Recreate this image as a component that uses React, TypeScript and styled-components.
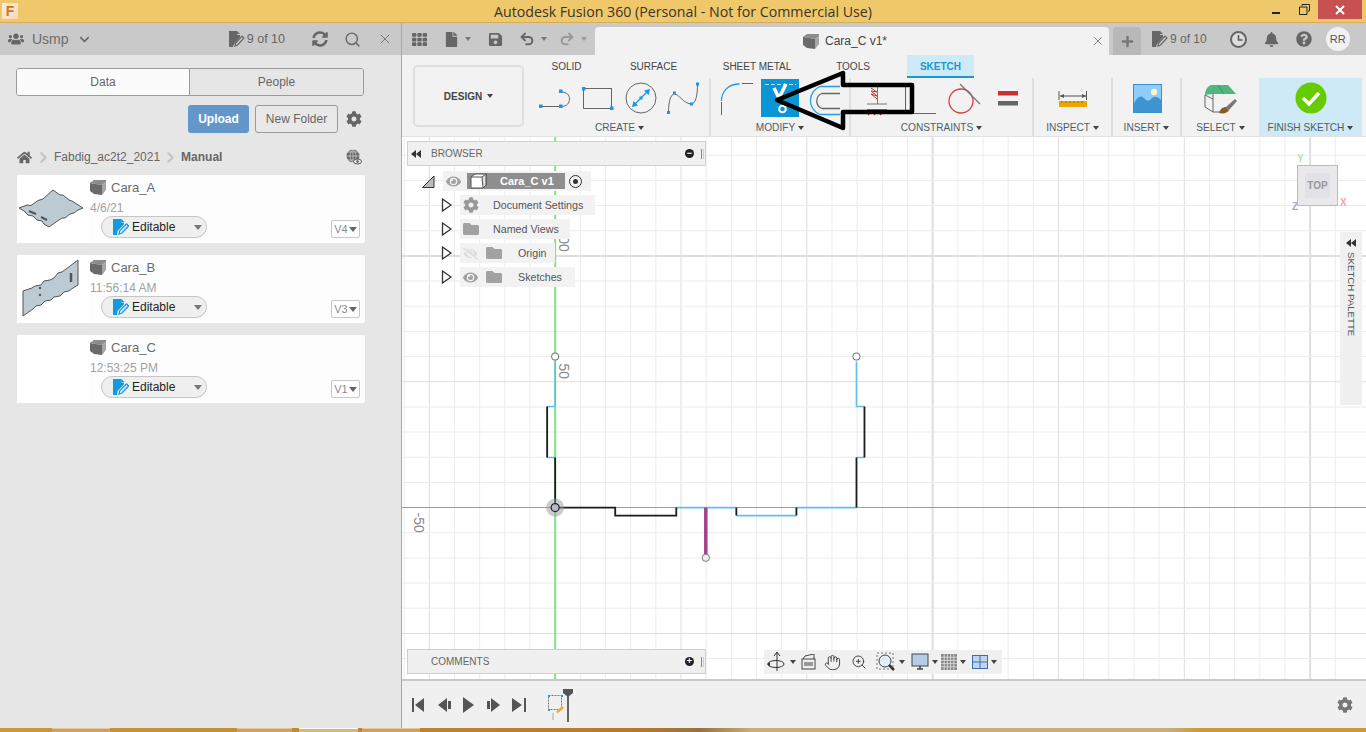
import styled, { createGlobalStyle } from "styled-components";
import {
  FaBell,
  FaCog,
  FaEye,
  FaEyeSlash,
  FaFolder,
  FaHome,
  FaPlus,
  FaQuestionCircle,
  FaSave,
  FaSyncAlt,
  FaTh,
  FaUsers,
  FaFile,
} from "react-icons/fa";
import { ChevronDown, ChevronRight, Hand, Redo2, Search, Undo2, X, ZoomIn } from "lucide-react";

const GlobalStyle = createGlobalStyle`
  html, body {
    margin: 0;
    padding: 0;
    overflow: hidden;
  }
  body {
    font-family: "Liberation Sans", Arial, sans-serif;
    color: #555;
  }
  * {
    box-sizing: border-box;
  }
`;

const Page = styled.div`
  width: 1366px;
  height: 732px;
  display: flex;
  flex-direction: column;
  overflow: hidden;
  background: #f0f0f0;
  position: relative;
`;

/* window chrome */
const TitleBar = styled.div`
  height: 23px;
  flex: none;
  display: flex;
  align-items: flex-start;
  background: #f0c86c;
  border-bottom: 1px solid #d6ac58;
  position: relative;
`;
const AppLogo = styled.div`
  width: 16px;
  height: 16px;
  margin: 3px 0 0 2px;
  background: linear-gradient(135deg, #fbeedd, #f6d9b8);
  color: #d9701e;
  font: 700 14px/16px "Liberation Sans", sans-serif;
  text-align: center;
`;
const WindowTitle = styled.div`
  position: absolute;
  left: 0;
  right: 0;
  top: 2px;
  text-align: center;
  font: 14.2px/19px "Open Sans", sans-serif;
  color: #3c3425;
`;
const WindowButtons = styled.div`
  margin-left: auto;
  display: flex;
  height: 19px;
  align-items: center;
`;
const WindowButton = styled.div<{ $close?: boolean }>`
  width: ${(p) => (p.$close ? "44px" : "28px")};
  height: 19px;
  margin-right: ${(p) => (p.$close ? "4px" : "0")};
  display: flex;
  align-items: center;
  justify-content: center;
  background: ${(p) => (p.$close ? "#c75050" : "transparent")};
`;
const TaskBar = styled.div`
  height: 4px;
  flex: none;
  display: flex;
  background: linear-gradient(
    90deg,
    #c99a3c 0,
    #c28a30 300px,
    #b8782c 640px,
    #94743c 700px,
    #c8ae7c 752px,
    #c8ae7c 1170px,
    #c89a38 1200px,
    #c89a38 100%
  );
`;
const TaskItem = styled.div<{ $at: number; $w: number; $active?: boolean }>`
  position: absolute;
  left: ${(p) => p.$at}px;
  bottom: 0;
  width: ${(p) => p.$w}px;
  height: 4px;
  background: ${(p) => (p.$active ? "#d8b878" : "#cda060")};
  border-top: 1px solid ${(p) => (p.$active ? "#fff" : "#e4c89a")};
`;

const Workspace = styled.div`
  flex: 1;
  display: flex;
  min-height: 0;
`;

/* data panel */
const DataPanel = styled.aside`
  width: 402px;
  flex: none;
  background: #e6e6e6;
  border-right: 1px solid #a8a8a8;
  display: flex;
  flex-direction: column;
`;
const PanelHeader = styled.div`
  height: 32px;
  background: #c9c9c9;
  display: flex;
  align-items: center;
  padding: 0 8px 0 8px;
  color: #666;
`;
const TeamName = styled.span`
  font-size: 14px;
  margin: 0 8px 0 8px;
  color: #6b6b6b;
`;
const JobCount = styled.span<{ $small?: boolean }>`
  display: flex;
  align-items: center;
  gap: 2px;
  font-size: ${(p) => (p.$small ? "12px" : "12.5px")};
  color: #666;
`;
const HeaderTools = styled.div`
  margin-left: auto;
  display: flex;
  align-items: center;
  gap: 16px;
  & > span {
    margin-right: 11px;
  }
`;
const PanelBody = styled.div`
  padding: 13px 37px 0 16px;
  width: 402px;
`;
const SegmentTabs = styled.div`
  display: flex;
  width: 348px;
  height: 28px;
  border: 1px solid #9a9a9a;
  border-radius: 3px;
  overflow: hidden;
`;
const Segment = styled.div<{ $active?: boolean; $w: number }>`
  width: ${(p) => p.$w}px;
  text-align: center;
  font-size: 12px;
  line-height: 26px;
  color: #666;
  background: ${(p) => (p.$active ? "#fbfbfb" : "#e6e6e6")};
  border-right: ${(p) => (p.$active ? "1px solid #9a9a9a" : "none")};
`;
const ActionRow = styled.div`
  display: flex;
  justify-content: flex-end;
  align-items: center;
  margin-top: 9px;
  height: 28px;
  width: 348px;
  gap: 6px;
  padding-right: 2px;
  color: #666;
`;
const UploadButton = styled.button`
  width: 61px;
  height: 28px;
  border: none;
  border-radius: 3px;
  background: #6497c9;
  color: #fff;
  font: 700 12px "Liberation Sans", sans-serif;
  padding: 0;
`;
const FolderButton = styled.button`
  width: 83px;
  height: 28px;
  border: 1px solid #9a9a9a;
  border-radius: 3px;
  background: #e8e8e8;
  color: #666;
  font: 12px "Liberation Sans", sans-serif;
  padding: 0;
  margin-right: 2px;
`;
const Crumbs = styled.div`
  display: flex;
  align-items: center;
  gap: 2px;
  margin-top: 14px;
  height: 20px;
  width: 348px;
  padding-left: 1px;
  font-size: 12px;
  color: #666;
  & > svg:first-child {
    margin-right: 1px;
  }
  & > svg:last-child {
    margin-left: auto;
    margin-right: 2px;
  }
`;
const CrumbStrong = styled.b`
  color: #666;
`;
const CardList = styled.div`
  display: flex;
  flex-direction: column;
  gap: 12px;
  margin: 8px 0 0 1px;
`;
const Card = styled.div`
  width: 348px;
  height: 68px;
  display: flex;
  background: #fdfdfd;
  border-radius: 2px;
`;
const Thumb = styled.div`
  width: 73px;
  height: 68px;
  flex: none;
  background: #fff;
`;
const CardBody = styled.div`
  flex: 1;
  padding-top: 4px;
`;
const CardTitle = styled.div`
  display: flex;
  align-items: center;
  gap: 5px;
  height: 17px;
  font-size: 13px;
  color: #6a6a6a;
`;
const CardTime = styled.div`
  font-size: 12px;
  line-height: 14px;
  margin-top: 5px;
  color: #a2a2a2;
`;
const CardFooter = styled.div`
  display: flex;
  align-items: flex-end;
  justify-content: space-between;
  padding: 0 5px 0 11px;
  margin-top: 1px;
`;
const EditablePill = styled.div`
  width: 106px;
  height: 22px;
  display: flex;
  align-items: center;
  padding: 0 4px 0 11px;
  border: 1px solid #c6c6c6;
  border-radius: 11px;
  background: #efefef;
  font-size: 12px;
  color: #222;
  gap: 3px;
  & > i {
    margin-left: auto;
  }
`;
const VersionBox = styled.div`
  width: 29px;
  height: 18px;
  display: flex;
  align-items: center;
  justify-content: center;
  gap: 1px;
  border: 1px solid #c8c8c8;
  border-radius: 2px;
  font-size: 11px;
  color: #8a8a8a;
  background: #fff;
`;

/* design area */
const DesignArea = styled.main`
  flex: 1;
  display: flex;
  flex-direction: column;
  min-width: 0;
`;
const TabStrip = styled.div`
  height: 32px;
  background: #c9c9c9;
  display: flex;
  align-items: flex-end;
  color: #666;
`;
const QuickTools = styled.div`
  width: 193px;
  height: 32px;
  padding-left: 10px;
  display: flex;
  align-items: center;
`;
const QuickTool = styled.span<{ $w: number; $dim?: boolean }>`
  width: ${(p) => p.$w}px;
  display: flex;
  align-items: center;
  gap: 6px;
  color: ${(p) => (p.$dim ? "#989898" : "#666")};
`;
const DocTab = styled.div`
  width: 514px;
  height: 28px;
  background: #f2f2f2;
  border-radius: 4px 4px 0 0;
  display: flex;
  align-items: center;
  justify-content: center;
  gap: 6px;
  position: relative;
  font-size: 12px;
  color: #444;
  padding-right: 14px;
`;
const DocClose = styled.span`
  position: absolute;
  right: 4px;
  top: 7px;
  display: flex;
  color: #777;
`;
const NewTab = styled.div`
  width: 28px;
  height: 28px;
  margin-left: 4px;
  background: #b8b8b8;
  border-radius: 4px 4px 0 0;
  display: flex;
  align-items: center;
  justify-content: center;
  color: #777;
`;
const StripRight = styled.div`
  flex: 1;
  height: 32px;
  display: flex;
  align-items: center;
  padding-left: 11px;
`;
const StripIcons = styled.div`
  display: flex;
  align-items: center;
  margin-left: 23px;
  gap: 17px;
`;
const Avatar = styled.div`
  width: 24px;
  height: 24px;
  margin-left: 14px;
  border-radius: 50%;
  background: #f1f1f1;
  font-size: 11px;
  line-height: 24px;
  text-align: center;
  color: #555;
`;

const Ribbon = styled.div`
  height: 82px;
  flex: none;
  display: flex;
  background: #f2f2f2;
  padding-left: 11px;
  border-bottom: 1px solid #e2e2e2;
`;
const ModeButton = styled.div`
  width: 111px;
  height: 62px;
  margin-top: 10px;
  flex: none;
  display: flex;
  align-items: center;
  justify-content: center;
  gap: 5px;
  border: 2px solid #dedede;
  border-radius: 5px;
  font: 700 10px "Liberation Sans", sans-serif;
  color: #444;
`;
const RibbonMain = styled.div`
  margin-left: 6px;
  display: flex;
  flex-direction: column;
`;
const RibbonTabs = styled.div`
  height: 23px;
  display: flex;
`;
const RibbonTab = styled.div<{ $w: number; $active?: boolean }>`
  width: ${(p) => p.$w}px;
  height: 23px;
  margin-left: ${(p) => (p.$active ? "11px" : "0")};
  text-align: center;
  font-size: 10px;
  line-height: 23px;
  font-weight: ${(p) => (p.$active ? 700 : 400)};
  color: ${(p) => (p.$active ? "#1c96d2" : "#444")};
  background: ${(p) => (p.$active ? "#cdeaf6" : "transparent")};
  border-bottom: ${(p) => (p.$active ? "2px solid #1c96d2" : "none")};
`;
const RibbonGroups = styled.div`
  display: flex;
  height: 58px;
`;
const Group = styled.div<{ $w: number; $gap?: number; $hot?: boolean; $last?: boolean }>`
  width: ${(p) => p.$w}px;
  height: 58px;
  display: flex;
  flex-direction: column;
  align-items: center;
  background: ${(p) => (p.$hot ? "#cdeaf6" : "transparent")};
  border-right: ${(p) => (p.$hot || p.$last ? "none" : "2px solid #dfdfdf")};
  & > div:first-child {
    gap: ${(p) => p.$gap ?? 0}px;
  }
`;
const ToolRow = styled.div`
  height: 38px;
  margin-top: 1px;
  display: flex;
  align-items: center;
  justify-content: center;
`;
const GroupLabel = styled.div`
  margin-top: 5px;
  display: flex;
  align-items: center;
  gap: 3px;
  font-size: 10.1px;
  line-height: 12px;
  color: #4f5c68;
`;
const Caret = styled.i<{ $size?: number; $color?: string }>`
  display: inline-block;
  width: 0;
  height: 0;
  border-left: ${(p) => p.$size ?? 3}px solid transparent;
  border-right: ${(p) => p.$size ?? 3}px solid transparent;
  border-top: ${(p) => (p.$size ?? 3) + 1}px solid ${(p) => p.$color ?? "#444"};
`;
const ArrowMark = styled.svg`
  position: absolute;
  left: 770px;
  top: 69px;
  pointer-events: none;
`;

const Canvas = styled.div`
  flex: 1;
  position: relative;
  background: #fff;
  overflow: hidden;
`;
const Sketch = styled.svg`
  display: block;
  width: 100%;
  height: 100%;
`;
const FloatPanel = styled.div<{ $w: number; $top: number }>`
  position: absolute;
  left: 5px;
  top: ${(p) => p.$top}px;
  width: ${(p) => p.$w}px;
  height: 25px;
  display: flex;
  align-items: center;
  padding: 0 1px 0 3px;
  background: #f0f0f0;
  border: 1px solid #cfcfcf;
  font-size: 10px;
  color: #666;
`;
const PanelName = styled.span<{ $indent: number }>`
  margin-left: ${(p) => p.$indent}px;
  flex: 1;
`;
const PanelRound = styled.span`
  width: 9px;
  height: 9px;
  border-radius: 50%;
  background: #222;
  color: #fff;
  font: 700 9px/9px "Liberation Sans", sans-serif;
  text-align: center;
  margin-right: 7px;
`;
const PanelGrip = styled.span`
  width: 3px;
  height: 10px;
  border-left: 1px solid #888;
  border-right: 1px solid #ccc;
`;
const Tree = styled.div`
  position: absolute;
  left: 20px;
  top: 34px;
  display: flex;
  flex-direction: column;
  gap: 4px;
`;
const TreeLine = styled.div<{ $indent?: number }>`
  display: flex;
  align-items: center;
  height: 20px;
  gap: 8px;
  padding-left: ${(p) => p.$indent ?? 0}px;
`;
const TreeChip = styled.div<{ $w: number; $root?: boolean }>`
  width: ${(p) => p.$w}px;
  height: 20px;
  margin-left: ${(p) => (p.$root ? "0" : "-1px")};
  display: flex;
  align-items: center;
  background: #f2f2f2;
  font-size: 10.7px;
  color: #555;
  padding-left: 3px;
`;
const ChipIcon = styled.span<{ $w: number }>`
  width: ${(p) => p.$w}px;
  flex: none;
  display: flex;
  align-items: center;
  gap: 8px;
  color: #9a9a9a;
`;
const RootName = styled.div`
  width: 98px;
  height: 16px;
  background: #8e8e8e;
  color: #fff;
  font-weight: 700;
  font-size: 11px;
  line-height: 16px;
  padding-left: 33px;
  margin-left: 6px;
  position: relative;
`;
const RootCube = styled.span`
  position: absolute;
  left: 3px;
  top: 0;
  display: flex;
  height: 16px;
  width: 17px;
`;
const Radio = styled.span`
  width: 13px;
  height: 13px;
  margin-left: 4px;
  border: 1px solid #333;
  border-radius: 50%;
  display: flex;
  align-items: center;
  justify-content: center;
  &::after {
    content: "";
    width: 5px;
    height: 5px;
    border-radius: 50%;
    background: #333;
  }
`;
const ViewCube = styled.div`
  position: absolute;
  left: 895px;
  top: 28px;
  width: 41px;
  height: 41px;
  background: #e9e9ec;
  border: 1px solid #bbb;
  display: flex;
  align-items: center;
  justify-content: center;
  font: 700 10px "Liberation Sans", sans-serif;
  color: #999;
  &::before {
    content: "";
    position: absolute;
    inset: 7px;
    background: #e1e1e6;
  }
`;
const CubeFace = styled.span`
  position: relative;
`;
const AxisLetter = styled.span<{ $color: string; $x: number; $y: number }>`
  position: absolute;
  left: ${(p) => p.$x}px;
  top: ${(p) => p.$y}px;
  font: 700 10px "Liberation Sans", sans-serif;
  color: ${(p) => p.$color};
`;
const PaletteTab = styled.div`
  position: absolute;
  right: 4px;
  top: 95px;
  width: 22px;
  height: 173px;
  background: #f0f0f0;
  display: flex;
  flex-direction: column;
  align-items: center;
  padding-top: 7px;
  color: #333;
`;
const PaletteLabel = styled.span`
  writing-mode: vertical-rl;
  font-size: 9.7px;
  margin-top: 5px;
  color: #555;
`;
const NavBar = styled.div`
  position: absolute;
  left: 362px;
  top: 513px;
  width: 238px;
  height: 24px;
  background: #f0f0f0;
  display: flex;
  align-items: center;
  padding-left: 3px;
  gap: 1px;
  color: #444;
`;
const NavTool = styled.span<{ $w: number }>`
  width: ${(p) => p.$w}px;
  display: flex;
  align-items: center;
  gap: 3px;
`;
const Timeline = styled.div`
  height: 49px;
  flex: none;
  display: flex;
  align-items: center;
  background: #f0f0f0;
  border-top: 2px solid #c9c9c9;
  padding-left: 10px;
  color: #555;
`;
const PlayControls = styled.div`
  display: flex;
  align-items: center;
  gap: 11.5px;
`;
const TimelineMarker = styled.svg`
  margin-left: 20px;
`;
const TimelineEnd = styled.span`
  margin-left: auto;
  margin-right: 13px;
  display: flex;
  color: #777;
`;

const DocPencil = ({ color = "#666" }: { color?: string }) => (
  <svg width="16" height="16" viewBox="0 0 16 16">
    <path d="M0 0h7l1 0v4l3 0L11 6 4.500 14 4 16H0z" fill={color} />
    <path d="M8 0l3 3H8z" fill={color} />
    <path d="M6 15l.6-3 6.400-7 2 2-6.500 7z" fill="none" stroke={color} strokeWidth="1.200" />
  </svg>
);

const EditIcon = () => (
  <svg width="16" height="16" viewBox="0 0 16 16">
    <path d="M0 0h7.500l1 0v3.500H11v2L4.500 12l-.5 4H0z" fill="#119bdc" />
    <path d="M8.500 0l3 3h-3z" fill="#119bdc" />
    <path d="M6 15l.7-3.200L13.500 5l2 2L9 14z" fill="none" stroke="#119bdc" strokeWidth="1.300" />
  </svg>
);

const BoxIcon = () => (
  <svg width="16" height="15" viewBox="0 0 16 15">
    <path d="M0 3l4-3h12v2L12 5z" fill="#8c8c8c" />
    <path d="M0 3l12 2v10L4 14 0 11z" fill="#6a6a6a" />
    <path d="M12 5l4-3v8l-4 5z" fill="#a5a5a5" />
  </svg>
);

const LineArcIcon = () => (
  <svg width="36" height="36" viewBox="537 79 36 36">
    <path d="M541 105.500h20c6 0 8.500-3.500 8.500-7.500s-2.500-7-8.500-7" fill="none" stroke="#666" />
    <rect x="539" y="103.500" width="3.500" height="3.500" fill="#1c96e8" />
    <rect x="559" y="103.500" width="3.500" height="3.500" fill="#1c96e8" />
    <rect x="559" y="88.500" width="3.500" height="3.500" fill="#1c96e8" />
  </svg>
);
const RectIcon = () => (
  <svg width="36" height="36" viewBox="580 79 36 36">
    <rect x="583.500" y="87.500" width="28" height="20" fill="none" stroke="#666" />
    <rect x="582" y="86" width="3.500" height="3.500" fill="#1c96e8" />
    <rect x="610" y="105.500" width="3.500" height="3.500" fill="#1c96e8" />
  </svg>
);
const CircleIcon = () => (
  <svg width="36" height="36" viewBox="622 79 36 36">
    <circle cx="640" cy="97" r="15" fill="none" stroke="#666" />
    <path d="M632 105l16-16" stroke="#1c96e8" strokeWidth="1.300" />
    <path d="M631 106l1.500-6 4.500 4.500zM649 88l-1.500 6-4.500-4.500z" fill="#1c96e8" />
    <rect x="638.500" y="95.500" width="3" height="3" fill="#1c96e8" />
  </svg>
);
const SplineIcon = () => (
  <svg width="36" height="36" viewBox="667 79 36 36">
    <path d="M669.500 111c0-10 2-18 6-18s9 9 16 10c6 1 7-12 7-19" fill="none" stroke="#666" />
    <rect x="668" y="110" width="3" height="3" fill="#1c96e8" />
    <rect x="674" y="90.500" width="3" height="3" fill="#1c96e8" />
    <rect x="691" y="101.500" width="3" height="3" fill="#1c96e8" />
    <rect x="697" y="81.500" width="3" height="3" fill="#1c96e8" />
  </svg>
);
const FilletIcon = () => (
  <svg width="36" height="36" viewBox="720 79 36 36">
    <path d="M722.500 100c0-9 6-17 18-17" fill="none" stroke="#2a9be4" strokeWidth="1.300" />
    <path d="M722.500 101v13M743 82.500h11" stroke="#666" />
  </svg>
);
const TrimIcon = () => (
  <svg width="38" height="38" viewBox="762 79 38 38">
    <rect x="762" y="79" width="38" height="38" fill="#0a96d6" />
    <path d="M766 84.500h31" stroke="#b6e2f6" strokeDasharray="4 2" />
    <path d="M775 88l7 14M787 84l-8 16" stroke="#fff" strokeWidth="3.500" />
    <circle cx="783.500" cy="109" r="3.300" fill="none" stroke="#fff" strokeWidth="2" />
  </svg>
);
const OffsetIcon = () => (
  <svg width="36" height="36" viewBox="805 79 36 36">
    <path d="M840 85.500h-20a15 15 0 0 0 0 28h20" fill="none" stroke="#2a9be4" strokeWidth="1.300" />
    <path d="M840 92.500h-18a8 8 0 0 0 0 15h18" fill="none" stroke="#666" strokeWidth="1.300" />
  </svg>
);
const CoincidentIcon = () => (
  <svg width="36" height="36" viewBox="859 79 36 36">
    <path d="M878.500 84v19M868 103h20" stroke="#777" />
    <path d="M872 87l6 4-6-1 6 5-6-2 6 5" fill="none" stroke="#c93030" />
    <path d="M868 109h20M869 114l4-4M875 114l4-4M881 114l4-4" stroke="#c93030" strokeWidth="1.300" />
  </svg>
);
const VerticalIcon = () => (
  <svg width="36" height="36" viewBox="903 79 36 36">
    <path d="M906.500 83v30" stroke="#c93030" />
    <path d="M913 112.500h24" stroke="#666" />
  </svg>
);
const TangentIcon = () => (
  <svg width="36" height="36" viewBox="945 79 36 36">
    <circle cx="960" cy="100" r="12" fill="none" stroke="#d24545" strokeWidth="1.300" />
    <path d="M959 83l20 20" stroke="#777" strokeWidth="1.300" />
  </svg>
);
const EqualIcon = () => (
  <svg width="36" height="36" viewBox="989 79 36 36">
    <rect x="997" y="90" width="20" height="4.500" fill="#c93030" />
    <rect x="997" y="100" width="20" height="4.500" fill="#666" />
  </svg>
);
const InspectIcon = () => (
  <svg width="36" height="36" viewBox="1055 79 36 36">
    <path d="M1059 90v9M1086.500 90v9M1060 95h26" stroke="#555" />
    <path d="M1060 95l4-2v4zM1086 95l-4-2v4z" fill="#555" />
    <rect x="1059" y="100" width="28" height="6" fill="#f0a400" />
    <path d="M1062 100v2M1066 100v2M1070 100v2M1074 100v2M1078 100v2M1082 100v2" stroke="#9a6a00" />
  </svg>
);
const InsertIcon = () => (
  <svg width="36" height="36" viewBox="1128 79 36 36">
    <rect x="1132.500" y="83.500" width="28" height="28" fill="#8ccdfb" stroke="#3d8fc8" />
    <path d="M1133 111v-9c4-7 7-8 10-5s4 4 7 1 6-3 10 1v12z" fill="#3c95d0" />
    <circle cx="1153" cy="91" r="3.200" fill="#fff6c8" />
  </svg>
);
const SelectIcon = () => (
  <svg width="36" height="36" viewBox="1201 79 36 36">
    <path d="M1203 94c0-5 3-9 6-10h17l8 9h-23z" fill="#52b77e" />
    <path d="M1216 84l6 9" stroke="#3b9465" />
    <path d="M1203 94v12l8 5V98l-8-4zM1211 98c0-2 0-4 0-5M1211 111h13" fill="none" stroke="#666" />
    <path d="M1224 106l9-8 2 2-8 9z" fill="#777" />
    <path d="M1217 112c1-4 4-6 7-6l3 3c-1 3-6 4-10 3z" fill="#8a5a2a" />
  </svg>
);
const FinishIcon = () => (
  <svg width="36" height="36" viewBox="1292 79 36 36">
    <circle cx="1310" cy="97" r="15.500" fill="#66cc00" />
    <path d="M1302 97l6 6 10-11" fill="none" stroke="#fff" strokeWidth="3.500" />
  </svg>
);

const OrbitIcon = () => (
  <svg width="20" height="22" viewBox="0 0 20 22">
    <path d="M10 2v18M7 5l3-4 3 4" fill="none" stroke="#333" />
    <ellipse cx="9" cy="13" rx="8" ry="3.500" fill="none" stroke="#333" />
    <path d="M0 13l3 3v-5z" fill="#333" />
  </svg>
);
const LookIcon = () => (
  <svg width="15" height="16" viewBox="0 0 15 16">
    <rect x="1" y="5" width="13" height="10" fill="none" stroke="#444" />
    <rect x="3" y="8" width="9" height="4" fill="#999" />
    <path d="M2 5l2-3 9-2v5" fill="none" stroke="#444" />
  </svg>
);
const FitIcon = () => (
  <svg width="20" height="20" viewBox="0 0 20 20">
    <rect x="1" y="1" width="16" height="16" fill="none" stroke="#777" strokeDasharray="2 2" />
    <circle cx="9" cy="9" r="6" fill="#dff0fa" stroke="#444" />
    <path d="M13 13l5 5" stroke="#333" strokeWidth="2.500" />
  </svg>
);
const DisplayIcon = () => (
  <svg width="18" height="18" viewBox="0 0 18 18">
    <rect x="1" y="1" width="16" height="12" fill="#b4cce4" stroke="#444" />
    <path d="M6 16h6M9 13v3" stroke="#444" strokeWidth="1.500" />
  </svg>
);
const GridIcon = () => (
  <svg width="16" height="16" viewBox="0 0 16 16">
    <rect width="16" height="16" fill="#8a8a8a" />
    <path d="M3.200 0v16M6.400 0v16M9.600 0v16M12.800 0v16M0 3.200h16M0 6.400h16M0 9.600h16M0 12.800h16" stroke="#eee" strokeWidth=".7" />
  </svg>
);
const ViewportIcon = () => (
  <svg width="16" height="14" viewBox="0 0 16 14">
    <rect x=".5" y=".5" width="15" height="13" fill="#c0d6ec" stroke="#3c6ea5" />
    <path d="M8 0v14M0 7h16" stroke="#3c6ea5" />
  </svg>
);

// transport glyphs of the timeline: triangle plus an optional end bar
const Transport = ({ d, w = 14 }: { d: string; w?: number }) => (
  <svg width={w} height="16" viewBox={`0 0 ${w} 16`}>
    <path d={d} fill="#555" />
  </svg>
);

const xLines = Array.from({ length: 38 }, (_, i) => 555 + (i - 6) * 25.14);
const yLines = Array.from({ length: 22 }, (_, i) => 507 + (i - 15) * 25.14);
const isMajor = (v: number, origin: number) => Math.round((v - origin) / 25.14) % 5 === 0;

const black = "M555 457V507H615V515H676V507 M736 507V515 M796 515V507 M547 406V457 M856 507V457 M864 457V406";
const blue = "M555 361V406H547 M547 457H555 M676 507H736 M736 515H796 M796 507H856 M856 457H864 M864 406H856V361";

const files = [
  { name: "Cara_A", time: "4/6/21", version: "V4" },
  { name: "Cara_B", time: "11:56:14 AM", version: "V3" },
  { name: "Cara_C", time: "12:53:25 PM", version: "V1" },
];

const treeRows = [
  { label: "Document Settings", w: 135, kind: "gear" },
  { label: "Named Views", w: 110, kind: "folder" },
  { label: "Origin", w: 95, kind: "hidden" },
  { label: "Sketches", w: 115, kind: "shown" },
];

const Triangle = () => (
  <svg width="12" height="14" viewBox="0 0 12 14">
    <path d="M1.500 1l8.500 6-8.500 6z" fill="#fff" stroke="#333" strokeWidth="1.300" />
  </svg>
);

const App = () => {
  return (
    <Page>
      <GlobalStyle />
      <TitleBar>
        <AppLogo>F</AppLogo>
        <WindowTitle>Autodesk Fusion 360 (Personal - Not for Commercial Use)</WindowTitle>
        <WindowButtons>
          <WindowButton>
            <svg width="10" height="10" viewBox="0 0 10 10">
              <path d="M1 8h8" stroke="#222" strokeWidth="2" />
            </svg>
          </WindowButton>
          <WindowButton>
            <svg width="11" height="11" viewBox="0 0 11 11">
              <path d="M3 2V.5h7.500V7H9M.5 3h7.500v7.500H.5z" fill="none" stroke="#222" />
            </svg>
          </WindowButton>
          <WindowButton $close>
            <svg width="10" height="10" viewBox="0 0 10 10">
              <path d="M1 1l8 8M9 1l-8 8" stroke="#fff" strokeWidth="2" />
            </svg>
          </WindowButton>
        </WindowButtons>
      </TitleBar>

      <Workspace>
        <DataPanel>
          <PanelHeader>
            <FaUsers size={16} />
            <TeamName>Usmp</TeamName>
            <ChevronDown size={15} strokeWidth={2.500} />
            <HeaderTools>
              <JobCount>
                <DocPencil />9 of 10
              </JobCount>
              <FaSyncAlt size={16} />
              <Search size={17} />
              <X size={16} strokeWidth={1.200} />
            </HeaderTools>
          </PanelHeader>
          <PanelBody>
            <SegmentTabs>
              <Segment $active $w={174}>Data</Segment>
              <Segment $w={174}>People</Segment>
            </SegmentTabs>
            <ActionRow>
              <UploadButton>Upload</UploadButton>
              <FolderButton>New Folder</FolderButton>
              <FaCog size={16} />
            </ActionRow>
            <Crumbs>
              <FaHome size={15} />
              <ChevronRight size={17} color="#c4c4c4" strokeWidth={3} />
              <span>Fabdig_ac2t2_2021</span>
              <ChevronRight size={17} color="#c4c4c4" strokeWidth={3} />
              <CrumbStrong>Manual</CrumbStrong>
              <svg width="16" height="16" viewBox="0 0 16 16">
                <circle cx="7" cy="7" r="6.500" fill="#666" />
                <path d="M0 7h14M7 0v14M2 3h10M2 11h10M7 0c-4 4-4 10 0 14M7 0c4 4 4 10 0 14" stroke="#e6e6e6" strokeWidth=".6" fill="none" />
                <ellipse cx="11.500" cy="12.500" rx="4" ry="2.500" fill="#e6e6e6" stroke="#555" />
                <circle cx="11.500" cy="12.500" r="1.200" fill="#555" />
              </svg>
            </Crumbs>
            <CardList>
              {files.map((file, i) => (
                <Card key={file.name}>
                  <Thumb>
                    {i === 0 && (
                      <svg width="73" height="68" viewBox="17 175 73 68">
                        <path d="M19 208l8-3 4 .5 7-5 5-1.500 10-9 7 5 3 0 6 5 3 1 11 7-5 2-4 3-4 1-5 4-3 0-6 4-7 5-5-3-2-3-5-1-4-4-5-1-4-4z" fill="#bccbd3" stroke="#555" />
                        <path d="M29 211l7 3M41 217l6 3" stroke="#555" strokeWidth="2" />
                      </svg>
                    )}
                    {i === 1 && (
                      <svg width="73" height="68" viewBox="17 255 73 68">
                        <path d="M23 291l9-3 3-2 6-1 3-4 6-1 4-2 4-5 4-1 4-3 12-9v25l-5 3-4 3-5 1-4 4-6 1-3 3-6 1-4 4-5 1-3 3-10 7z" fill="#bccbd3" stroke="#555" />
                        <path d="M71 273v9" stroke="#555" strokeWidth="2.500" />
                        <circle cx="40" cy="288" r="1.200" fill="#555" />
                        <circle cx="40" cy="295" r="1.200" fill="#555" />
                      </svg>
                    )}
                  </Thumb>
                  <CardBody>
                    <CardTitle>
                      <BoxIcon />
                      {file.name}
                    </CardTitle>
                    <CardTime>{file.time}</CardTime>
                    <CardFooter>
                      <EditablePill>
                        <EditIcon />
                        Editable
                        <Caret $size={4} $color="#777" />
                      </EditablePill>
                      <VersionBox>
                        {file.version}
                        <Caret $size={4} $color="#666" />
                      </VersionBox>
                    </CardFooter>
                  </CardBody>
                </Card>
              ))}
            </CardList>
          </PanelBody>
        </DataPanel>

        <DesignArea>
          <TabStrip>
            <QuickTools>
              <QuickTool $w={32}><FaTh size={15} /></QuickTool>
              <QuickTool $w={44}><FaFile size={15} /><Caret $size={3.500} $color="#777" /></QuickTool>
              <QuickTool $w={31}><FaSave size={15} /></QuickTool>
              <QuickTool $w={40}><Undo2 size={16} strokeWidth={3} /><Caret $size={3.500} $color="#777" /></QuickTool>
              <QuickTool $w={30} $dim><Redo2 size={16} strokeWidth={3} /><Caret $size={3.500} $color="#989898" /></QuickTool>
            </QuickTools>
            <DocTab>
              <BoxIcon />
              Cara_C v1*
              <DocClose><X size={14} strokeWidth={1.500} /></DocClose>
            </DocTab>
            <NewTab><FaPlus size={13} /></NewTab>
            <StripRight>
              <JobCount $small>
                <DocPencil />9 of 10
              </JobCount>
              <StripIcons>
                <svg width="17" height="17" viewBox="0 0 17 17">
                  <circle cx="8.500" cy="8.500" r="7.500" fill="#ddd" stroke="#666" strokeWidth="2" />
                  <path d="M8.500 4v5h4" fill="none" stroke="#555" strokeWidth="1.500" />
                </svg>
                <FaBell size={15} />
                <FaQuestionCircle size={16} />
              </StripIcons>
              <Avatar>RR</Avatar>
            </StripRight>
          </TabStrip>

          <Ribbon>
            <ModeButton>DESIGN <Caret /></ModeButton>
            <RibbonMain>
              <RibbonTabs>
                <RibbonTab $w={73}>SOLID</RibbonTab>
                <RibbonTab $w={101}>SURFACE</RibbonTab>
                <RibbonTab $w={106}>SHEET METAL</RibbonTab>
                <RibbonTab $w={86}>TOOLS</RibbonTab>
                <RibbonTab $w={67} $active>SKETCH</RibbonTab>
              </RibbonTabs>
              <RibbonGroups>
                <Group $w={181} $gap={7}>
                  <ToolRow>
                    <LineArcIcon />
                    <RectIcon />
                    <CircleIcon />
                    <SplineIcon />
                  </ToolRow>
                  <GroupLabel>CREATE <Caret /></GroupLabel>
                </Group>
                <Group $w={140} $gap={6}>
                  <ToolRow>
                    <FilletIcon />
                    <TrimIcon />
                    <OffsetIcon />
                  </ToolRow>
                  <GroupLabel>MODIFY <Caret /></GroupLabel>
                </Group>
                <Group $w={183} $gap={8}>
                  <ToolRow>
                    <CoincidentIcon />
                    <VerticalIcon />
                    <TangentIcon />
                    <EqualIcon />
                  </ToolRow>
                  <GroupLabel>CONSTRAINTS <Caret /></GroupLabel>
                </Group>
                <Group $w={79}>
                  <ToolRow><InspectIcon /></ToolRow>
                  <GroupLabel>INSPECT <Caret /></GroupLabel>
                </Group>
                <Group $w={69}>
                  <ToolRow><InsertIcon /></ToolRow>
                  <GroupLabel>INSERT <Caret /></GroupLabel>
                </Group>
                <Group $w={77} $last>
                  <ToolRow><SelectIcon /></ToolRow>
                  <GroupLabel>SELECT <Caret /></GroupLabel>
                </Group>
                <Group $w={103} $hot>
                  <ToolRow><FinishIcon /></ToolRow>
                  <GroupLabel>FINISH SKETCH <Caret /></GroupLabel>
                </Group>
              </RibbonGroups>
            </RibbonMain>
          </Ribbon>

          <Canvas>
            <Sketch viewBox="402 137 963 541">
              {xLines.map((x) => (
                <line
                  key={x}
                  x1={x}
                  x2={x}
                  y1="137"
                  y2="679"
                  stroke={isMajor(x, 555) ? "#dedede" : "#ececec"}
                  strokeWidth={Math.abs(x - 932) < 2 || Math.abs(x - 1309) < 2 ? 2 : 1}
                />
              ))}
              {yLines.map((y) => (
                <line
                  key={y}
                  x1="402"
                  x2="1366"
                  y1={y}
                  y2={y}
                  stroke={isMajor(y, 507) ? "#dedede" : "#ececec"}
                  strokeWidth={Math.abs(y - 255) < 2 ? 2 : 1}
                />
              ))}
              <path d="M402 507H555" stroke="#9a9a9a" />
              <path d="M555 507H1366" stroke="#c98a8a" />
              <path d="M555 137V679" stroke="#86e086" strokeWidth="2" />
              <text x="0" y="0" fontSize="14" fill="#888" transform="translate(559 363) rotate(90)">50</text>
              <text x="0" y="0" fontSize="14" fill="#888" transform="translate(559 236) rotate(90)">00</text>
              <text x="0" y="0" fontSize="14" fill="#888" transform="translate(414 512) rotate(90)">-50</text>
              <path d={blue} fill="none" stroke="#62c0ee" strokeWidth="1.600" />
              <path d={black} fill="none" stroke="#1c1c1c" strokeWidth="1.800" />
              <path d="M705.500 507V554" stroke="#a23f8b" strokeWidth="3.500" />
              <circle cx="555" cy="507" r="9" fill="#9a9a9a" opacity=".5" />
              <circle cx="555" cy="507" r="4" fill="#b8b4cc" stroke="#222" strokeWidth="1.200" />
              <circle cx="555" cy="356" r="3.500" fill="#fff" stroke="#777" />
              <circle cx="856" cy="356" r="3.500" fill="#fff" stroke="#777" />
              <circle cx="705.500" cy="557" r="3.500" fill="#eee" stroke="#888" />
            </Sketch>

            <FloatPanel $w={299} $top={4}>
              <svg width="10" height="8" viewBox="0 0 10 8">
                <path d="M5 0v8L0 4zM10 0v8L5 4z" fill="#333" />
              </svg>
              <PanelName $indent={10}>BROWSER</PanelName>
              <PanelRound>−</PanelRound>
              <PanelGrip />
            </FloatPanel>

            <Tree>
              <TreeLine>
                <svg width="13" height="13" viewBox="0 0 13 13">
                  <path d="M0.500 12.500L12 1v11.500z" fill="#bbb" stroke="#333" />
                </svg>
                <TreeChip $w={148} $root>
                  <FaEye size={15} color="#a2a2a2" />
                  <RootName>
                    <RootCube>
                      <svg width="17" height="16" viewBox="0 0 17 16">
                        <path d="M1 4l4-3h11v11l-3 3H1z" fill="#fff" stroke="#555" />
                        <path d="M12 4H1M12 4l4-3v11l-3 3z" fill="#ddd" stroke="#555" />
                      </svg>
                    </RootCube>
                    Cara_C v1
                  </RootName>
                  <Radio />
                </TreeChip>
              </TreeLine>
              {treeRows.map((row) => (
                <TreeLine key={row.label} $indent={19}>
                  <Triangle />
                  <TreeChip $w={row.w}>
                    {row.kind === "gear" && <ChipIcon $w={30}><FaCog size={16} color="#999" /></ChipIcon>}
                    {row.kind === "folder" && <ChipIcon $w={30}><FaFolder size={16} color="#a2a2a2" /></ChipIcon>}
                    {row.kind === "hidden" && (
                      <ChipIcon $w={55}>
                        <FaEyeSlash size={15} color="#dcdcdc" />
                        <FaFolder size={16} color="#a2a2a2" />
                      </ChipIcon>
                    )}
                    {row.kind === "shown" && (
                      <ChipIcon $w={55}>
                        <FaEye size={15} color="#a2a2a2" />
                        <FaFolder size={16} color="#a2a2a2" />
                      </ChipIcon>
                    )}
                    {row.label}
                  </TreeChip>
                </TreeLine>
              ))}
            </Tree>

            <AxisLetter $color="#a6e8a6" $x={895} $y={16}>Y</AxisLetter>
            <AxisLetter $color="#f0a6a6" $x={938} $y={60}>X</AxisLetter>
            <AxisLetter $color="#a6a6f0" $x={890} $y={64}>Z</AxisLetter>
            <ViewCube><CubeFace>TOP</CubeFace></ViewCube>

            <PaletteTab>
              <svg width="10" height="8" viewBox="0 0 10 8">
                <path d="M5 0v8L0 4zM10 0v8L5 4z" fill="#333" />
              </svg>
              <PaletteLabel>SKETCH PALETTE</PaletteLabel>
            </PaletteTab>

            <FloatPanel $w={299} $top={512}>
              <PanelName $indent={20}>COMMENTS</PanelName>
              <PanelRound>+</PanelRound>
              <PanelGrip />
            </FloatPanel>

            <NavBar>
              <NavTool $w={33}><OrbitIcon /><Caret $size={3} /></NavTool>
              <NavTool $w={22}><LookIcon /></NavTool>
              <NavTool $w={26}><Hand size={17} strokeWidth={1.400} /></NavTool>
              <NavTool $w={24}><ZoomIn size={16} strokeWidth={1.500} /></NavTool>
              <NavTool $w={34}><FitIcon /><Caret $size={3} /></NavTool>
              <NavTool $w={29}><DisplayIcon /><Caret $size={3} /></NavTool>
              <NavTool $w={30}><GridIcon /><Caret $size={3} /></NavTool>
              <NavTool $w={30}><ViewportIcon /><Caret $size={3} /></NavTool>
            </NavBar>
          </Canvas>

          <Timeline>
            <PlayControls>
              <Transport d="M0 1h2v14H0zM12 1v14L3 8z" />
              <Transport d="M9 1v14L0 8zM10 4h3v8h-3z" />
              <Transport w={12} d="M0 0l11 8-11 8z" />
              <Transport d="M4 1v14l9-7zM0 4h3v8H0z" />
              <Transport d="M12 1h2v14h-2zM0 1v14l10-7z" />
            </PlayControls>
            <TimelineMarker width="30" height="34" viewBox="0 0 30 34">
              <rect x="2.500" y="7.500" width="13" height="14" fill="none" stroke="#777" strokeDasharray="2 1" />
              <path d="M2 7h2v2H2zM15 7h2v2h-2zM2 21h2v2H2z" fill="#1c96e8" />
              <path d="M10 24l6-6 2 2-6 5z" fill="#f0a830" />
              <path d="M7 25v7" stroke="#ccc" strokeWidth="2" />
              <path d="M17 1h10v4l-5 4-5-4z" fill="#555" />
              <path d="M22 8v26" stroke="#555" strokeWidth="1.800" />
            </TimelineMarker>
            <TimelineEnd><FaCog size={16} /></TimelineEnd>
          </Timeline>
        </DesignArea>
      </Workspace>

      <TaskBar>
        <TaskItem $at={52} $w={58} />
        <TaskItem $at={237} $w={55} />
        <TaskItem $at={299} $w={59} $active />
        <TaskItem $at={362} $w={58} />
      </TaskBar>

      <ArrowMark width="146" height="63" viewBox="770 69 146 63">
        <path d="M777 100L843 73V85H912V112H843V128Z" fill="none" stroke="#000" strokeWidth="4.500" strokeLinejoin="round" />
      </ArrowMark>
    </Page>
  );
};

export default App;
